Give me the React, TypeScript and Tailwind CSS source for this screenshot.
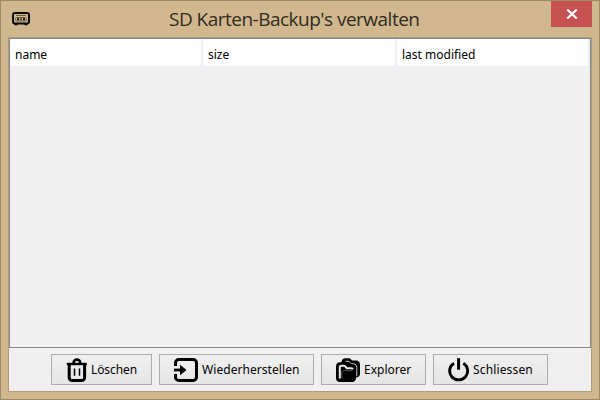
import type { ReactNode } from 'react';

const TrashIcon = () => (
  <svg width="22" height="24" viewBox="0 0 22 24" fill="none" stroke="#000">
    <path d="M.8 6h20" strokeWidth="2.400" />
    <path d="M7.700 5.500V4.400a3.200 2.800 0 0 1 6.400 0v1.100" strokeWidth="2.700" />
    <path d="M3.200 6v13.500a3 3 0 0 0 3 3h9.400a3 3 0 0 0 3-3V6" strokeWidth="3" />
    <path d="M8.500 10.500v7.300M13.500 10.500v7.300" strokeWidth="1.500" />
  </svg>
);

const RestoreIcon = () => (
  <svg width="24" height="24" viewBox="0 0 24 24" fill="none" stroke="#000">
    <path d="M1.500 8V4.800a3.300 3.300 0 0 1 3.300-3.300h14.400a3.300 3.300 0 0 1 3.300 3.300v14.400a3.300 3.300 0 0 1-3.300 3.300H4.800a3.300 3.300 0 0 1-3.300-3.300V16" strokeWidth="3" />
    <path d="M0 12h8" strokeWidth="2.800" />
    <path d="M6.500 7.500 11.800 12l-5.300 4.500z" fill="#000" strokeWidth="1" strokeLinejoin="round" />
  </svg>
);

const FoldersIcon = () => (
  <svg width="24" height="24" viewBox="0 0 24 24" fill="none" stroke="#000">
    <path d="M5.500 4V3.500Q6.500.3 9.500.3h3.300q1.500 0 2.400 1.200l.8.900H20q4 .3 4 4v9.200q0 3.400-3.500 3.900h-5L5.500 8z" fill="#000" stroke="none" />
    <path d="M9.500 3.300h2.700q1.200 0 2 1.100l1.100 1.200h1.800q3.600.3 3.700 3.700v9" stroke="#d8d8d8" strokeWidth=".9" />
    <path d="M0 8Q.2 4.400 4 4.200h4.200q1.600 0 2.500 1.200L12 6.800h4q4 .2 4 4V20q-.2 4-4 4H4q-4-.2-4-4z" fill="#000" stroke="none" />
    <path d="M3.800 20.500V9.500Q3.800 7.700 5.600 7.700h2.200q.9 0 1.500.8l1.400 1.700h4.500q1.500 0 1.700 1.200" stroke="#e8e8e8" strokeWidth="2" />
    <path d="M5.800 20V14.500q0-1.800 1.800-1.800h9" stroke="#8a8a8a" strokeWidth=".6" />
  </svg>
);

const PowerIcon = () => (
  <svg width="22" height="24" viewBox="0 0 22 24" fill="none" stroke="#000">
    <path d="M6 5.200a9 9 0 1 0 9.300 0" strokeWidth="2.900" />
    <path d="M10.600 .2v11.500" strokeWidth="3" />
  </svg>
);

const CassetteIcon = () => (
  <svg width="18" height="14" viewBox="0 0 18 14" fill="none" stroke="#0c0a06">
    <rect x="1" y="1" width="16" height="10.500" rx="2" strokeWidth="2" />
    <path d="M4 3.500h10" stroke="#695c45" />
    <rect x="3.500" y="5.500" width="11" height="3.500" rx="1" stroke="#695c45" strokeWidth="1" />
    <path d="M5 7.300h2M8.300 7.300h1.400M11 7.300h2" strokeWidth="2" />
    <path d="M2.500 12.500h3M12.500 12.500h3" strokeWidth="1.500" />
    <path d="M6 12.500h6" stroke="#695c45" />
  </svg>
);

function Button({ icon, label, size, text }: { icon: ReactNode; label: string; size: string; text: string }) {
  return (
    <button className={`flex h-[31px] shrink-0 items-center border border-[#acacac] bg-linear-to-b from-[#f0f0f0] to-[#e5e5e5] pl-[14px] ${size}`}>
      <span className="shrink-0">{icon}</span>
      <span className={`whitespace-nowrap ${text}`}>{label}</span>
    </button>
  );
}

export default function App() {
  return (
    <div className="flex h-[400px] w-[600px] flex-col border border-[#9f8b69] bg-[#d0b78e] font-['Noto_Sans',sans-serif] text-[12px] text-black">
      <header className="flex h-9 shrink-0 items-start">
        <div className="w-[168px] pt-[11px] pl-[11px]"><CassetteIcon /></div>
        <h1 className="w-[382px] pt-[4px] font-['Open_Sans',sans-serif] text-[19px] leading-[28px] tracking-[-0.51px] whitespace-nowrap text-[#302b22]">SD Karten-Backup's verwalten</h1>
        <button className="flex h-[26px] w-[41px] items-center justify-center bg-[#c75050]" aria-label="close">
          <svg width="12" height="10" viewBox="0 0 12 10" stroke="#fff" strokeWidth="2.200"><path d="m1.200.5 9.600 9M10.800.5l-9.600 9" /></svg>
        </button>
      </header>
      <main className="mx-[7px] flex h-[355px] flex-col border border-[#b39d79] bg-[#f0f0f0]">
        <section className="h-[310px] shrink-0 border border-[#828790] bg-[#f0f0f0]">
          <div className="flex h-[28px] border-b border-[#e8effb] bg-[#fdfdfd] leading-[32px]">
            <div className="w-[193px] border-r-2 border-[#ebf0f5] pl-[5px]">name</div>
            <div className="w-[194px] border-r-2 border-[#ebf0f5] pl-[5px]">size</div>
            <div className="w-[193px] border-r-2 border-[#e8effb] pl-[5px]">last modified</div>
          </div>
        </section>
        <div className="flex gap-[7px] pt-[6px] pl-[42px]">
          <Button icon={<TrashIcon />} label="Löschen" size="w-[101px]" text="pl-[3px] tracking-[-0.1px]" />
          <Button icon={<RestoreIcon />} label="Wiederherstellen" size="w-[155px]" text="pl-[4px] tracking-[0.06px]" />
          <Button icon={<FoldersIcon />} label="Explorer" size="w-[105px]" text="pl-[4px]" />
          <Button icon={<PowerIcon />} label="Schliessen" size="w-[115px]" text="pl-[3px] tracking-[0.15px]" />
        </div>
      </main>
    </div>
  );
}
